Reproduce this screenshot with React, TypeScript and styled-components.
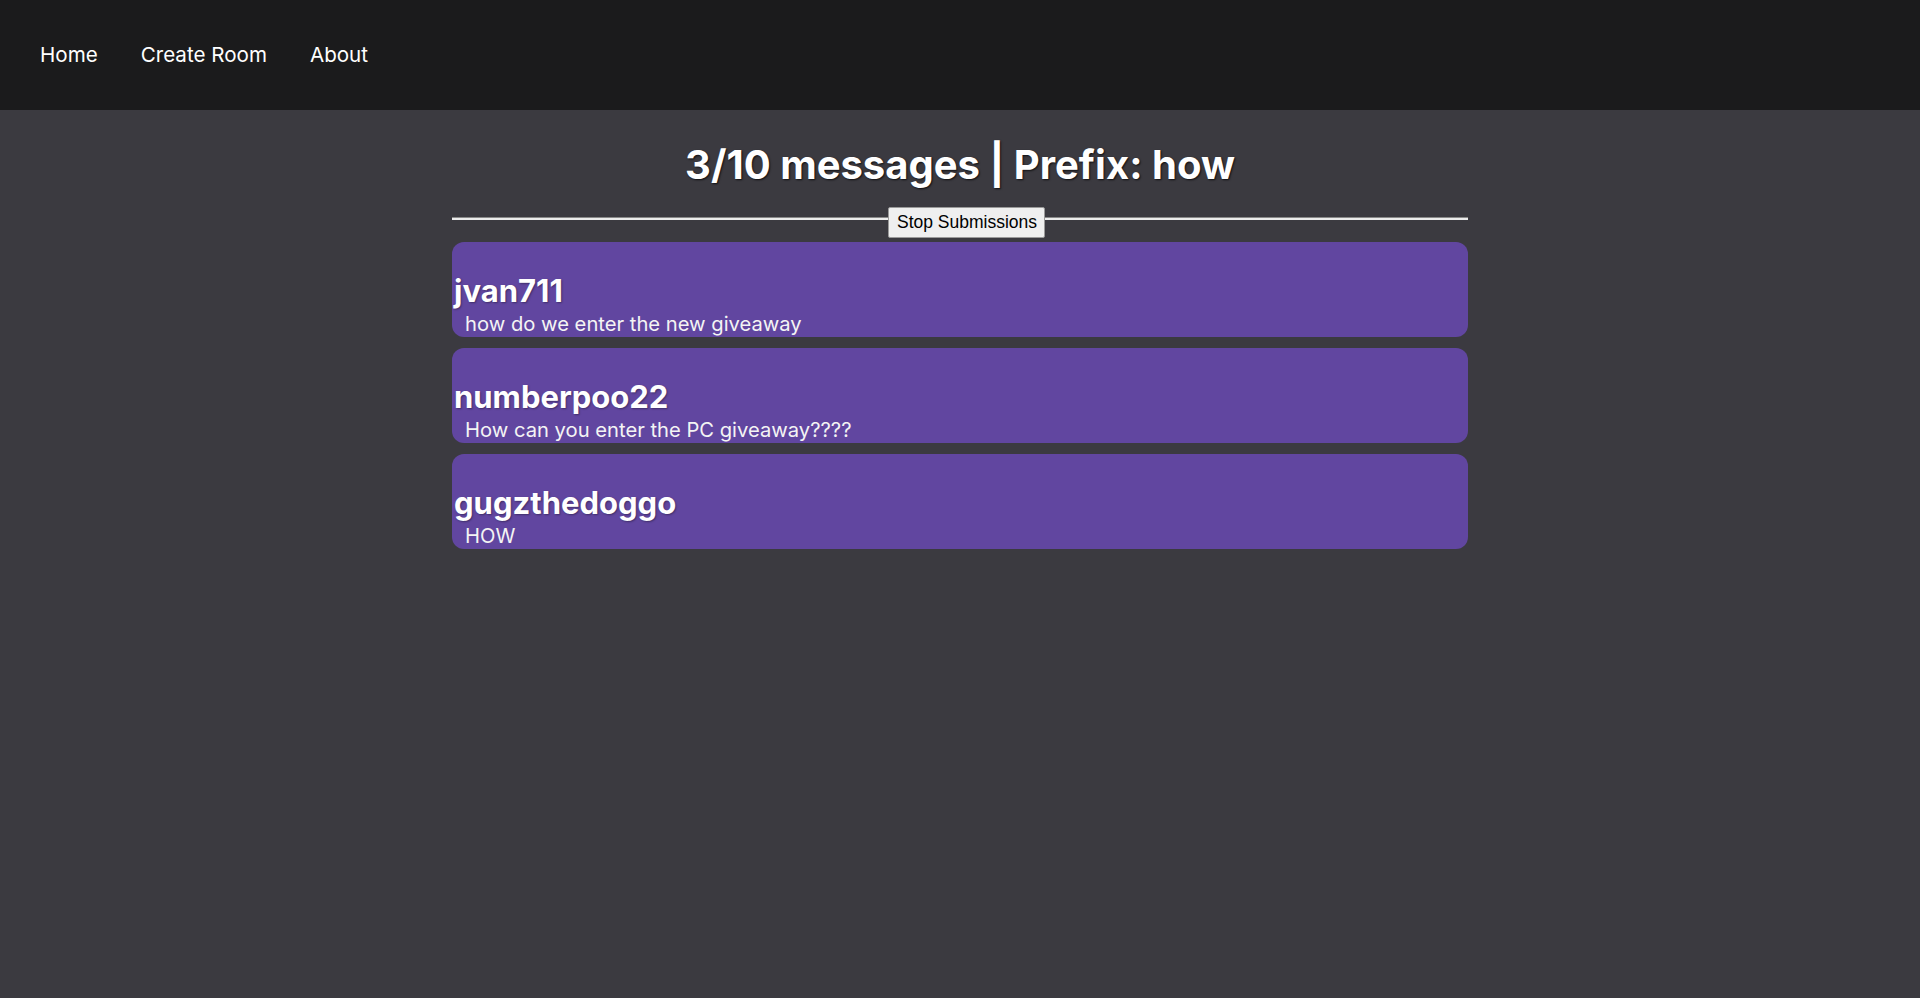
import React from "react";
import styled, { createGlobalStyle } from "styled-components";

const GlobalStyle = createGlobalStyle`
  html, body {
    margin: 0;
    padding: 0;
    background: #3b3a40;
    font-family: Inter, "Noto Sans", sans-serif;
    color: #ffffff;
  }
  #root {
    min-height: 998px;
    background: #3b3a40;
  }
`;

const NavBar = styled.nav`
  height: 110px;
  background: #1b1b1c;
  display: flex;
  align-items: center;
  padding: 0 0 0 40px;
  gap: 43px;
  box-sizing: border-box;
`;

const NavLink = styled.a`
  font-family: Inter, sans-serif;
  font-size: 20.6px;
  font-weight: 400;
  color: #ffffff;
  text-decoration: none;
  cursor: pointer;
  line-height: 24px;
`;

const Main = styled.main`
  width: 1016px;
  margin: 0 auto;
  display: flex;
  flex-direction: column;
`;

const Title = styled.h1`
  margin: 30px 0 0 0;
  font-family: Inter, sans-serif;
  font-size: 40px;
  line-height: 50px;
  font-weight: 700;
  text-align: center;
  color: #ffffff;
  text-shadow: 1px 1px 2px rgba(0, 0, 0, 0.75);
`;

const DividerRow = styled.div`
  margin-top: 17px;
  display: flex;
  align-items: flex-start;
  height: 31px;
`;

const Rule = styled.div<{ $basis?: string }>`
  flex: ${(p) => (p.$basis ? `0 0 ${p.$basis}` : "1 1 0")};
  height: 3px;
  margin-top: 10px;
  background: #ececec;
  border-top: 1px solid #8a8a8a;
  box-sizing: border-box;
`;

const StopButton = styled.button`
  height: 31px;
  padding: 0 7px 0 8px;
  font-family: "Liberation Sans", Arial, sans-serif;
  font-size: 17.5px;
  color: #000000;
  background: #efefef;
  border: 1px solid #9a9a9a;
  border-radius: 2px;
  cursor: pointer;
  white-space: nowrap;
`;

const MessageList = styled.div`
  margin-top: 4px;
  display: flex;
  flex-direction: column;
  gap: 11px;
`;

const Card = styled.div`
  background: #6146a0;
  border-radius: 12px;
  padding: 31px 0 1px 0;
  display: flex;
  flex-direction: column;
  overflow: hidden;
`;

const Username = styled.h2`
  margin: 0 0 3px 2px;
  font-family: Inter, sans-serif;
  font-size: 31px;
  line-height: 36px;
  font-weight: 700;
  color: #ffffff;
  text-shadow: 1px 1px 2px rgba(0, 0, 0, 0.35);
`;

const MessageText = styled.p`
  margin: 0 0 0 13px;
  font-family: Inter, sans-serif;
  font-size: 20.2px;
  line-height: 24px;
  font-weight: 400;
  color: #f4f4f4;
`;

const messages = [
  { user: "jvan711", text: "how do we enter the new giveaway" },
  { user: "numberpoo22", text: "How can you enter the PC giveaway????" },
  { user: "gugzthedoggo", text: "HOW" },
];

export default function App() {
  return (
    <>
      <GlobalStyle />
      <NavBar>
        <NavLink>Home</NavLink>
        <NavLink>Create Room</NavLink>
        <NavLink>About</NavLink>
      </NavBar>
      <Main>
        <Title>3/10 messages | Prefix: how</Title>
        <DividerRow>
          <Rule $basis="436px" />
          <StopButton>Stop Submissions</StopButton>
          <Rule />
        </DividerRow>
        <MessageList>
          {messages.map((m) => (
            <Card key={m.user}>
              <Username>{m.user}</Username>
              <MessageText>{m.text}</MessageText>
            </Card>
          ))}
        </MessageList>
      </Main>
    </>
  );
}
